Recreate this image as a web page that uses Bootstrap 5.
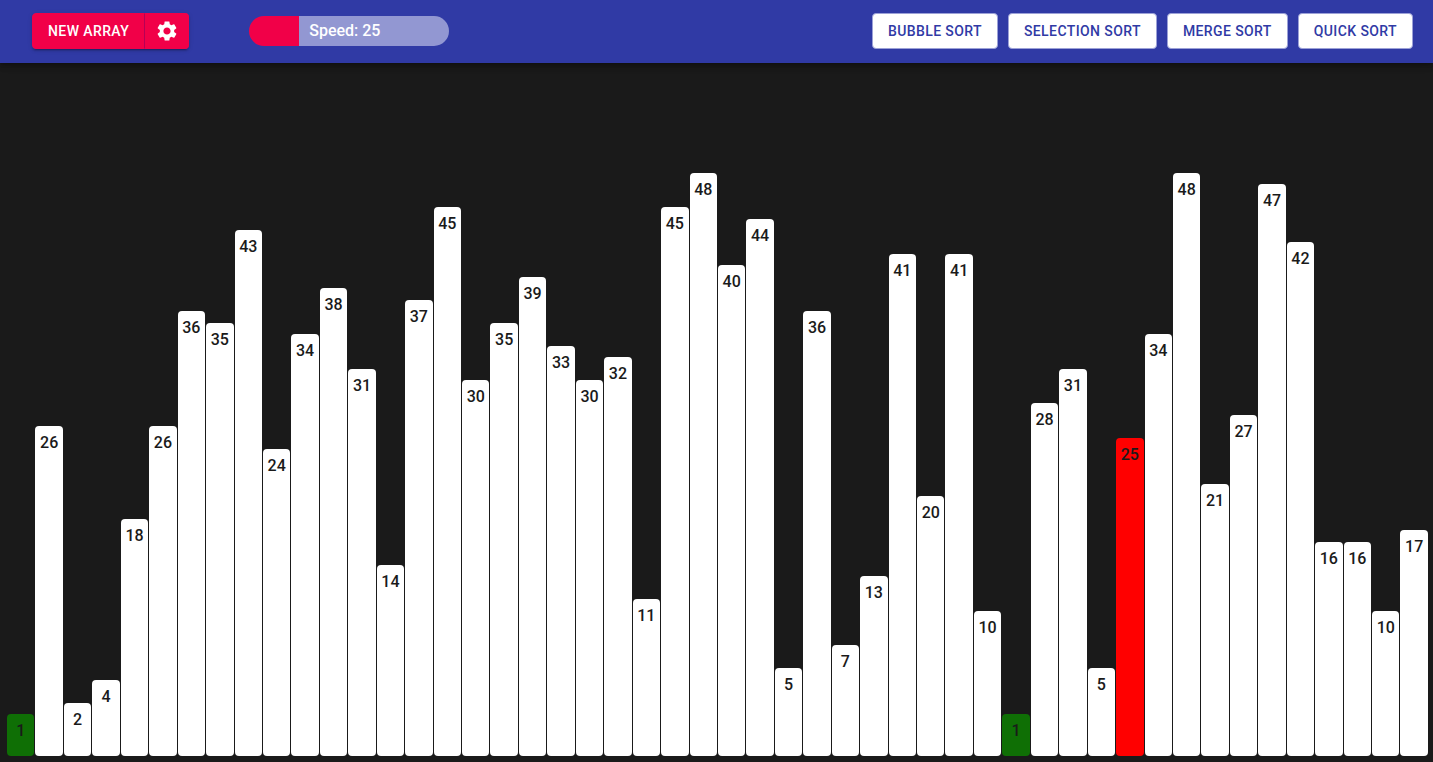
<!DOCTYPE html>
<html lang="en">
<head>
<meta charset="utf-8">
<meta name="viewport" content="width=device-width, initial-scale=1">
<title>Sorting Visualizer</title>
<link href="https://cdn.jsdelivr.net/npm/bootstrap@5.3.0/dist/css/bootstrap.min.css" rel="stylesheet">
<style>
  :root { --indigo: #303aa5; --pink: #f10048; --ink: #1a1a1a; }
  body { font-family: Roboto, sans-serif; background: var(--ink); }
  .toolbar {
    background: var(--indigo);
    padding: 13px 20px 14px 32px;
    box-shadow: 0 2px 4px -1px rgba(0,0,0,.2), 0 4px 5px rgba(0,0,0,.14), 0 1px 10px rgba(0,0,0,.12);
  }
  .toolbar .btn {
    --bs-btn-font-size: 14px;
    --bs-btn-font-weight: 500;
    --bs-btn-line-height: 24px;
    --bs-btn-padding-y: 5px;
    --bs-btn-padding-x: 15px;
    --bs-btn-border-radius: 4px;
    letter-spacing: .02857em;
    text-transform: uppercase;
  }
  .sorts { gap: 10px; }
  .btn-sort {
    --bs-btn-bg: #fff;
    --bs-btn-color: var(--indigo);
    --bs-btn-border-color: #9ca1d7;
    --bs-btn-hover-bg: #eceefa;
    --bs-btn-hover-color: var(--indigo);
  }
  .btn-pink {
    --bs-btn-bg: var(--pink);
    --bs-btn-color: #fff;
    --bs-btn-border-color: var(--pink);
    --bs-btn-hover-bg: #c5003c;
    --bs-btn-hover-color: #fff;
  }
  .array-actions {
    border-radius: 4px;
    box-shadow: 0 3px 1px -2px rgba(0,0,0,.2), 0 2px 2px rgba(0,0,0,.14), 0 1px 5px rgba(0,0,0,.12);
  }
  .toolbar .array-actions .btn-gear { padding: 5px 9px 5px 10px; border-left-color: #b60056; }
  .speed { width: 200px; margin-left: 60px; }
  .speed input {
    appearance: none;
    height: 30px;
    border-radius: 15px;
    background: linear-gradient(to right, var(--pink) var(--level), #9297d2 var(--level));
    cursor: pointer;
  }
  .speed input::-webkit-slider-thumb { appearance: none; width: 1px; height: 30px; background: transparent; }
  .speed label { left: 60px; line-height: 30px; font-weight: 500; color: #fff; pointer-events: none; }
  .chart { padding: 0 5px 6px 6px; min-height: 0; }
  .slot { flex: 1 1 0; min-width: 0; padding-left: 1px; height: calc(30px + var(--value) * 1.663%); }
  .column {
    background: #fff;
    color: var(--ink);
    border-radius: 4px;
    padding-top: 5px;
    font-weight: 500;
    line-height: 24px;
  }
  .column.least { background: #0f6f05; }
  .column.active { background: #f00; }
</style>
</head>
<body>
<div class="d-flex flex-column vh-100">
  <header class="toolbar d-flex align-items-center position-relative">
    <div class="btn-group array-actions">
      <button type="button" class="btn btn-pink">New Array</button>
      <button type="button" class="btn btn-pink btn-gear d-flex align-items-center" aria-label="Settings">
        <svg width="24" height="24" viewBox="0 0 24 24" fill="currentColor" aria-hidden="true"><path d="M19.14 12.94c.04-.3.06-.61.06-.94 0-.32-.02-.64-.07-.94l2.03-1.58c.18-.14.23-.41.12-.61l-1.92-3.32c-.12-.22-.37-.29-.59-.22l-2.39.96c-.5-.38-1.03-.7-1.62-.94l-.36-2.54c-.04-.24-.24-.41-.48-.41h-3.84c-.24 0-.43.17-.47.41l-.36 2.54c-.59.24-1.13.57-1.62.94l-2.39-.96c-.22-.08-.47 0-.59.22L2.74 8.87c-.12.21-.08.47.12.61l2.03 1.58c-.05.3-.09.63-.09.94s.02.64.07.94l-2.03 1.58c-.18.14-.23.41-.12.61l1.92 3.32c.12.22.37.29.59.22l2.39-.96c.5.38 1.03.7 1.62.94l.36 2.54c.05.24.24.41.48.41h3.84c.24 0 .44-.17.47-.41l.36-2.54c.59-.24 1.13-.56 1.62-.94l2.39.96c.22.08.47 0 .59-.22l1.92-3.32c.12-.22.07-.47-.12-.61l-2.01-1.58zM12 15.6c-1.98 0-3.6-1.62-3.6-3.6s1.62-3.6 3.6-3.6 3.6 1.62 3.6 3.6-1.62 3.6-3.6 3.6z"/></svg>
      </button>
    </div>
    <div class="speed position-relative">
      <input id="speed" type="range" min="0" max="100" value="25" class="d-block w-100 m-0" style="--level: 25%">
      <label for="speed" class="position-absolute top-0">Speed: 25</label>
    </div>
    <div class="sorts d-flex ms-auto">
      <button type="button" class="btn btn-sort">Bubble Sort</button>
      <button type="button" class="btn btn-sort">Selection Sort</button>
      <button type="button" class="btn btn-sort">Merge Sort</button>
      <button type="button" class="btn btn-sort">Quick Sort</button>
    </div>
  </header>
  <main class="chart d-flex align-items-end flex-grow-1" id="chart"></main>
</div>
<script src="https://cdn.jsdelivr.net/npm/bootstrap@5.3.0/dist/js/bootstrap.bundle.min.js"></script>
<script>
  const values = [1, 26, 2, 4, 18, 26, 36, 35, 43, 24, 34, 38, 31, 14, 37, 45, 30, 35, 39, 33, 30, 32, 11, 45, 48,
                  40, 44, 5, 36, 7, 13, 41, 20, 41, 10, 1, 28, 31, 5, 25, 34, 48, 21, 27, 47, 42, 16, 16, 10, 17];
  const least = [0, 35];
  const active = 39;
  document.getElementById('chart').innerHTML = values.map((value, i) => {
    const state = least.includes(i) ? ' least' : i === active ? ' active' : '';
    return `<div class="slot" style="--value: ${value}"><div class="column h-100 text-center${state}">${value}</div></div>`;
  }).join('');
  const speed = document.getElementById('speed');
  speed.addEventListener('input', () => {
    speed.style.setProperty('--level', speed.value + '%');
    speed.labels[0].textContent = 'Speed: ' + speed.value;
  });
</script>
</body>
</html>
